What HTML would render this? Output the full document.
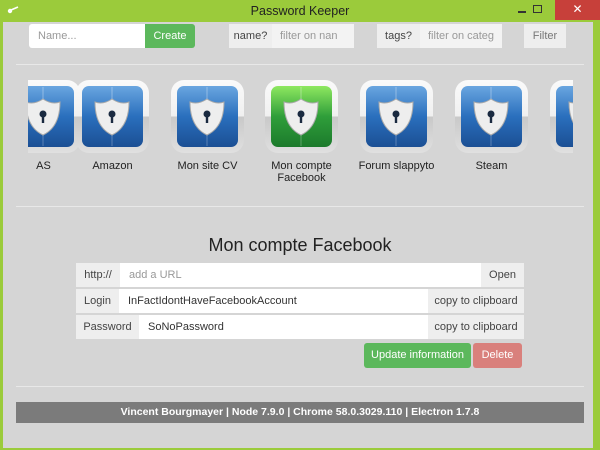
<!DOCTYPE html>
<html><head><meta charset="utf-8"><style>
*{box-sizing:border-box;margin:0;padding:0}
body{width:600px;height:450px;background:#9bcb3b;font-family:"Liberation Sans",sans-serif;position:relative;overflow:hidden;font-size:11px;color:#333}
.abs{position:absolute}
.c{position:absolute;left:3px;top:22px;width:590px;height:426px;background:#d5d5d5}
.title{left:0;top:4px;width:600px;text-align:center;font-size:12.5px;color:#222}
.in{background:#fff;color:#999;padding-left:9px;line-height:24px;height:24px}
.ad{background:#eee;color:#444;line-height:24px;height:24px;text-align:center}
.hr{height:1px;background:#e8e8e8;left:16px;width:568px}
.lab{width:95px;text-align:center;font-size:11px;color:#222;line-height:12px}
</style></head><body>
<div class="abs title">Password Keeper</div>
<svg class="abs" style="left:7px;top:6px" width="12" height="8"><circle cx="3" cy="5" r="2.2" fill="#fff"/><path d="M4 4 L11 1" stroke="#fff" stroke-width="1.6"/></svg>
<div class="abs" style="left:518px;top:11px;width:8px;height:1.5px;background:#333"></div>
<div class="abs" style="left:533px;top:5px;width:9px;height:8px;border:1.5px solid #333"></div>
<div class="abs" style="left:555px;top:0;width:45px;height:20px;background:#c7403a;color:#fff;text-align:center;font-size:12px;line-height:18px">✕</div>
<div class="c"></div>
<div class="abs in" style="left:29px;top:24px;width:116px;border-radius:3px 0 0 3px">Name...</div>
<div class="abs" style="left:145px;top:24px;width:50px;height:24px;background:#5cb85c;color:#fff;line-height:24px;text-align:center;border-radius:0 3px 3px 0">Create</div>
<div class="abs ad" style="left:229px;top:24px;width:43px">name?</div>
<div class="abs in" style="left:272px;top:24px;width:82px;background:#f3f3f3;padding-left:8px">filter on nan</div>
<div class="abs ad" style="left:377px;top:24px;width:43px">tags?</div>
<div class="abs in" style="left:420px;top:24px;width:82px;background:#f3f3f3;padding-left:8px">filter on categ</div>
<div class="abs ad" style="left:524px;top:24px;width:42px;color:#777">Filter</div>
<div class="abs hr" style="top:64px"></div>
<svg width="0" height="0" style="position:absolute"><defs>
<linearGradient id="o" x1="0" y1="0" x2="0" y2="1"><stop offset="0" stop-color="#fafafa"/><stop offset=".5" stop-color="#f0f0f0"/><stop offset=".5" stop-color="#c8c8c8"/><stop offset="1" stop-color="#e0e0e0"/></linearGradient>
<linearGradient id="b" x1="0" y1="0" x2="0" y2="1"><stop offset="0" stop-color="#6aa6e0"/><stop offset=".5" stop-color="#2a6fbd"/><stop offset="1" stop-color="#1b4f94"/></linearGradient>
<linearGradient id="g" x1="0" y1="0" x2="0" y2="1"><stop offset="0" stop-color="#8ee860"/><stop offset=".5" stop-color="#2f9e3a"/><stop offset="1" stop-color="#1c7a2c"/></linearGradient>
<g id="sh"><path d="M36 19 Q45 25 53 22 Q53 47 36 55 Q19 47 19 22 Q27 25 36 19Z" fill="#eee" stroke="#aaa" stroke-width="1"/><circle cx="36" cy="34" r="3.5" fill="#1a2a40"/><rect x="34.8" y="34" width="2.4" height="9" fill="#1a2a40"/><line x1="36" y1="7" x2="36" y2="19" stroke="#ffffff55"/><line x1="36" y1="55" x2="36" y2="66" stroke="#ffffff44"/></g>
</defs></svg>
<div class="abs" style="left:28px;top:80px;width:545px;height:110px;overflow:hidden">
<svg class="abs" style="left:-21px" width="73" height="73"><rect width="73" height="73" rx="13" fill="url(#o)"/><rect x="6" y="6" width="61" height="61" rx="7" fill="url(#b)"/><use href="#sh"/></svg>
<div class="abs lab" style="left:-32px;top:80px">AS</div>
<svg class="abs" style="left:48px" width="73" height="73"><rect width="73" height="73" rx="13" fill="url(#o)"/><rect x="6" y="6" width="61" height="61" rx="7" fill="url(#b)"/><use href="#sh"/></svg>
<div class="abs lab" style="left:37px;top:80px">Amazon</div>
<svg class="abs" style="left:143px" width="73" height="73"><rect width="73" height="73" rx="13" fill="url(#o)"/><rect x="6" y="6" width="61" height="61" rx="7" fill="url(#b)"/><use href="#sh"/></svg>
<div class="abs lab" style="left:132px;top:80px">Mon site CV</div>
<svg class="abs" style="left:237px" width="73" height="73"><rect width="73" height="73" rx="13" fill="url(#o)"/><rect x="6" y="6" width="61" height="61" rx="7" fill="url(#g)"/><use href="#sh"/></svg>
<div class="abs lab" style="left:226px;top:80px">Mon compte<br>Facebook</div>
<svg class="abs" style="left:332px" width="73" height="73"><rect width="73" height="73" rx="13" fill="url(#o)"/><rect x="6" y="6" width="61" height="61" rx="7" fill="url(#b)"/><use href="#sh"/></svg>
<div class="abs lab" style="left:321px;top:80px">Forum slappyto</div>
<svg class="abs" style="left:427px" width="73" height="73"><rect width="73" height="73" rx="13" fill="url(#o)"/><rect x="6" y="6" width="61" height="61" rx="7" fill="url(#b)"/><use href="#sh"/></svg>
<div class="abs lab" style="left:416px;top:80px">Steam</div>
<svg class="abs" style="left:522px" width="73" height="73"><rect width="73" height="73" rx="13" fill="url(#o)"/><rect x="6" y="6" width="61" height="61" rx="7" fill="url(#b)"/><use href="#sh"/></svg>
<div class="abs lab" style="left:511px;top:80px">Pol</div>
</div>
<div class="abs hr" style="top:206px"></div>
<div class="abs" style="left:0;top:235px;width:600px;text-align:center;font-size:18px;color:#222">Mon compte Facebook</div>
<div class="abs ad" style="left:76px;top:263px;width:44px">http://</div>
<div class="abs in" style="left:120px;top:263px;width:361px">add a URL</div>
<div class="abs ad" style="left:481px;top:263px;width:43px">Open</div>
<div class="abs ad" style="left:76px;top:289px;width:43px">Login</div>
<div class="abs in" style="left:119px;top:289px;width:309px;color:#333">InFactIdontHaveFacebookAccount</div>
<div class="abs ad" style="left:428px;top:289px;width:96px">copy to clipboard</div>
<div class="abs ad" style="left:76px;top:315px;width:63px">Password</div>
<div class="abs in" style="left:139px;top:315px;width:289px;color:#333">SoNoPassword</div>
<div class="abs ad" style="left:428px;top:315px;width:96px">copy to clipboard</div>
<div class="abs" style="left:364px;top:343px;width:107px;height:25px;background:#5cb85c;color:#fff;text-align:center;line-height:25px;border-radius:3px">Update information</div>
<div class="abs" style="left:473px;top:343px;width:49px;height:25px;background:#d9807c;color:#fff;text-align:center;line-height:25px;border-radius:3px">Delete</div>
<div class="abs hr" style="top:386px"></div>
<div class="abs" style="left:16px;top:402px;width:568px;height:21px;background:#7b7b7b;color:#fff;text-align:center;line-height:20px;font-size:10.5px;font-weight:bold">Vincent Bourgmayer | Node 7.9.0 | Chrome 58.0.3029.110 | Electron 1.7.8</div>
</body></html>
